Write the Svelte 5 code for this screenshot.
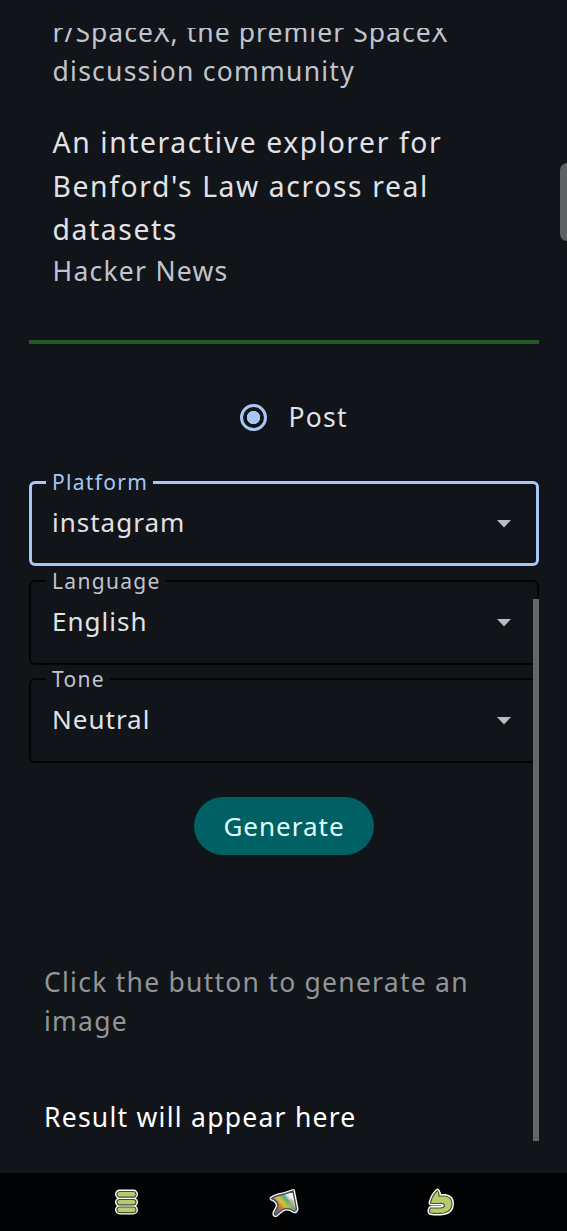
<script lang="ts">
  const fields = [
    { label: "Platform", value: "instagram", focused: true },
    { label: "Language", value: "English", focused: false },
    { label: "Tone", value: "Neutral", focused: false },
  ];
</script>

<div class="screen">
  <main class="content">
    <section class="feed">
      <p class="feed__source"><span class="feed__source-name">r/SpaceX, the premier SpaceX</span><br />discussion community</p>
      <h2 class="feed__title">An interactive explorer for<br />Benford's Law across real<br />datasets</h2>
      <p class="feed__source feed__source--news">Hacker News</p>
    </section>

    <hr class="divider" />

    <div class="radio">
      <span class="radio__circle"></span>
      <span class="radio__label">Post</span>
    </div>

    <div class="form">
      {#each fields as field}
        <fieldset class="field" class:field--focused={field.focused}>
          <legend class="field__label">{field.label}</legend>
          <div class="field__row">
            <span class="field__value">{field.value}</span>
            <svg class="field__arrow" viewBox="0 0 14 8"><path d="M0 0h14L7 7.5z" /></svg>
          </div>
        </fieldset>
      {/each}
    </div>

    <button class="generate">Generate</button>

    <p class="hint">Click the button to generate an<br />image</p>
    <p class="result">Result will appear here</p>
  </main>

  <nav class="navbar">
    <svg class="navbar__icon" viewBox="0 0 32 32">
      <g fill="#fff" stroke="#fff" stroke-width="4">
        <rect x="6" y="5.5" width="19" height="5.5" rx="2.7" />
        <rect x="6" y="13.5" width="19" height="5.5" rx="2.7" />
        <rect x="6" y="21" width="19" height="5.5" rx="2.7" />
      </g>
      <g fill="#b5cb70" stroke="#45502b" stroke-width="1.2">
        <rect x="6" y="5.5" width="19" height="5.7" rx="2.8" />
        <rect x="6" y="13.5" width="19" height="5.4" rx="2.7" />
        <rect x="6" y="21" width="19" height="5.7" rx="2.8" />
      </g>
    </svg>
    <svg class="navbar__icon" viewBox="0 0 32 32">
      <defs>
        <linearGradient id="kite" gradientUnits="userSpaceOnUse" x1="7" y1="21" x2="24" y2="6">
          <stop offset="0" stop-color="#8a6a58" />
          <stop offset="0.2" stop-color="#c9803c" />
          <stop offset="0.36" stop-color="#d9c23b" />
          <stop offset="0.5" stop-color="#8dbb4c" />
          <stop offset="0.62" stop-color="#43a8a0" />
          <stop offset="0.7" stop-color="#b9d6cb" />
          <stop offset="0.8" stop-color="#f3f1df" />
        </linearGradient>
      </defs>
      <path class="outline" d="M3.500 12.500Q6 10.500 10 9.500Q18 8 25 5L28.500 23Q28 26 25.500 25Q19.500 20.500 14 24L8 29Q6 29.500 6.500 27L10 20Q9.500 14.500 3.500 12.500z" />
      <path d="M3.500 12.500Q6 10.500 10 9.500Q18 8 25 5L28.500 23Q28 26 25.500 25Q19.500 20.500 14 24L8 29Q6 29.500 6.500 27L10 20Q9.500 14.500 3.500 12.500z" fill="url(#kite)" stroke="#48505f" stroke-width="1.4" />
      <path d="M22 13l3.500 1l1.500 8.500q-4-1-7.500-3.500z" fill="#c8a566" opacity="0.6" />
    </svg>
    <svg class="navbar__icon" viewBox="0 0 32 32">
      <path class="outline" d="M5.500 16.500Q8 8 12.500 4.500Q14.500 7 14 10H20Q27 11 27 17.500Q27 25.500 19 27Q12 28 5.500 27Q3.500 25 5.500 22H15.500Q20 21.500 19.500 19Q18.500 17 14 17.500H6.500Q5.500 17.500 5.500 16.500z" />
      <path d="M5.500 16.500Q8 8 12.500 4.500Q14.500 7 14 10H20Q27 11 27 17.500Q27 25.500 19 27Q12 28 5.500 27Q3.500 25 5.500 22H15.500Q20 21.500 19.500 19Q18.500 17 14 17.500H6.500Q5.500 17.500 5.500 16.500z" fill="#b5cb6c" stroke="#48532b" stroke-width="1.2" />
    </svg>
  </nav>

  <span class="scrollbar"></span>
  <span class="edge-handle"></span>
</div>

<style>
  :global(body) {
    background: #111418;
  }

  .screen {
    --text: #e1e2e8;
    --text-muted: #c0c4cf;
    --accent: #a5c8f7;
    position: relative;
    display: flex;
    flex-direction: column;
    width: 567px;
    height: 1231px;
    padding-top: 28px;
    box-sizing: border-box;
    overflow: hidden;
    background: #111418;
    color: var(--text);
    font-family: "Noto Sans", sans-serif;
    font-size: 26.5px;
    letter-spacing: 1.25px;
  }

  .content {
    display: flex;
    flex: 1;
    flex-direction: column;
    min-height: 0;
    padding: 0 28px 0 29px;
    overflow: hidden;
  }

  .feed {
    height: 312px;
    padding-left: 23.5px;
    box-sizing: border-box;
    white-space: nowrap;
  }

  .feed__source,
  .feed__title,
  .hint,
  .result {
    margin: 0;
    font-weight: 400;
  }

  .feed__source {
    margin-top: -15px;
    color: var(--text-muted);
    line-height: 39px;
  }

  .feed__source-name {
    letter-spacing: 1.05px;
  }

  .feed__title {
    margin-top: 30px;
    font-size: 28.3px;
    letter-spacing: 1.6px;
    line-height: 43.5px;
  }

  .feed__source--news {
    margin-top: 0;
  }

  .divider {
    width: 100%;
    height: 4px;
    margin: 0;
    border: none;
    background: #235723;
  }

  .radio {
    display: flex;
    align-items: center;
    gap: 21.5px;
    height: 40px;
    margin: 53px 0 0 211px;
  }

  .radio__circle {
    width: 27px;
    height: 27px;
    box-sizing: border-box;
    border: 3px solid var(--accent);
    border-radius: 50%;
    background: radial-gradient(circle, var(--accent) 6.3px, transparent 7px);
  }

  .form {
    display: flex;
    flex-direction: column;
    margin-top: 32px;
    font-size: 26px;
    letter-spacing: 1px;
  }

  .field {
    height: 97px;
    min-width: 0;
    margin: 0 0 1.7px;
    padding: 0 26px 0 15px;
    box-sizing: border-box;
    border: 2px solid #030507;
    border-radius: 6px;
  }

  .field__label {
    padding: 0 5px 0 6px;
    color: var(--text-muted);
    font-size: 21px;
    letter-spacing: 1.3px;
    line-height: 26px;
  }

  .field__row {
    display: flex;
    align-items: center;
    justify-content: space-between;
    height: 55px;
    padding-left: 6px;
  }

  .field__value {
    margin-top: -1px;
  }

  .field__arrow {
    width: 14px;
    height: 8px;
    margin-top: 3px;
    fill: #b9bcc1;
  }

  .field--focused {
    padding: 0 25px 0 14px;
    border: 3px solid var(--accent);
  }

  .field--focused .field__label {
    color: var(--accent);
  }

  .generate {
    align-self: center;
    width: 180px;
    height: 58px;
    margin-top: 32px;
    padding: 0;
    border: none;
    border-radius: 29px;
    background: #006064;
    color: #e0ffff;
    font: inherit;
    font-size: 26px;
    letter-spacing: 1px;
  }

  .hint {
    margin: 108px 0 0 15px;
    color: #929497;
    line-height: 38.5px;
    white-space: nowrap;
  }

  .result {
    margin: 58px 0 0 15px;
    color: #fff;
    line-height: 39px;
  }

  .navbar {
    display: flex;
    justify-content: space-around;
    height: 58px;
    padding: 0 48px;
    align-items: center;
    background: #010204;
  }

  .navbar__icon {
    width: 32px;
    height: 32px;
  }

  .outline {
    fill: #fff;
    stroke: #fff;
    stroke-width: 4;
    stroke-linejoin: round;
  }

  .scrollbar {
    position: absolute;
    top: 599px;
    left: 533px;
    width: 6px;
    height: 542px;
    background: #646665;
  }

  .edge-handle {
    position: absolute;
    top: 163px;
    right: 0;
    width: 7px;
    height: 78px;
    border-radius: 7px 0 0 7px;
    background: #5f6062;
  }
</style>
